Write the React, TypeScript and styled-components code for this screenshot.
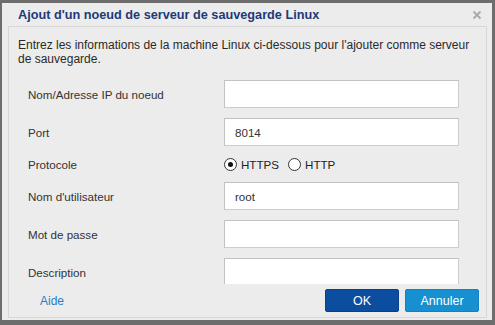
import React from 'react';
import styled, { createGlobalStyle } from 'styled-components';

const GlobalStyle = createGlobalStyle`
  html, body {
    margin: 0;
    padding: 0;
    background: #6d6d6d;
  }
  body {
    font-family: "Liberation Sans", Arial, sans-serif;
  }
`

const fields = [
  { label: 'Nom/Adresse IP du noeud', value: '' },
  { label: 'Port', value: '8014' },
  { label: 'Protocole', radio: true },
  { label: "Nom d'utilisateur", value: 'root' },
  { label: 'Mot de passe', value: '', password: true },
  { label: 'Description', value: '' },
]

const App: React.FC = () => {
  return (
    <>
      <GlobalStyle />
      <Frame>
        <Dialog>
          <TitleBar>
            <Title>Ajout d'un noeud de serveur de sauvegarde Linux</Title>
            <CloseIcon viewBox="0 0 10 10">
              <path d="M1.5 1.5 L8.5 8.5 M8.5 1.5 L1.5 8.5" stroke="#a9a9a9" strokeWidth="1.9" />
            </CloseIcon>
          </TitleBar>

          <Panel>
            <Intro>
              Entrez les informations de la machine Linux ci-dessous pour l'ajouter comme serveur de sauvegarde.
            </Intro>

            <FormArea>
              {fields.map((f) => (
                <FormRow key={f.label} $compact={!!f.radio}>
                  <FieldLabel>{f.label}</FieldLabel>
                  {f.radio ? (
                    <RadioGroup>
                      <RadioOption>
                        <RadioDot $checked />
                        HTTPS
                      </RadioOption>
                      <RadioOption>
                        <RadioDot />
                        HTTP
                      </RadioOption>
                    </RadioGroup>
                  ) : (
                    <TextInput
                      type={f.password ? 'password' : 'text'}
                      defaultValue={f.value}
                    />
                  )}
                </FormRow>
              ))}
            </FormArea>

            <Footer>
              <HelpLink>Aide</HelpLink>
              <Actions>
                <Button $primary>OK</Button>
                <Button>Annuler</Button>
              </Actions>
            </Footer>
          </Panel>
        </Dialog>
      </Frame>
    </>
  )
}

const Frame = styled.div`
  width: 495px;
  height: 325px;
  box-sizing: border-box;
  padding: 3px 3px 5px 2px;
  background: #6d6d6d;
`

const Dialog = styled.div`
  height: 100%;
  background: #ececec;
  display: flex;
  flex-direction: column;
`

const TitleBar = styled.div`
  height: 23px;
  display: flex;
  align-items: center;
  justify-content: space-between;
  padding: 0 10px 0 16px;
`

const Title = styled.div`
  color: #1d3a78;
  font-size: 12.7px;
  font-weight: 700;
`

const CloseIcon = styled.svg`
  width: 10px;
  height: 10px;
`

const Panel = styled.div`
  flex: 1;
  margin: 0 5px 2px 6px;
  border: 1px solid #d7d7d7;
  display: flex;
  flex-direction: column;
  min-height: 0;
`

const Intro = styled.div`
  padding: 11px 10px 0 9px;
  font-size: 12px;
  line-height: 14px;
  color: #2a2a2a;
`

const FormArea = styled.div`
  margin-top: 14px;
  height: 204px;
  overflow: hidden;
  display: flex;
  flex-direction: column;
  gap: 10px;
`

const FormRow = styled.div<{ $compact?: boolean }>`
  display: grid;
  grid-template-columns: 196px 235px;
  align-items: center;
  padding-left: 19px;
  height: ${props => (props.$compact ? '16px' : '28px')};
  flex-shrink: 0;
`

const FieldLabel = styled.div`
  font-size: 11.6px;
  color: #333;
`

const TextInput = styled.input`
  box-sizing: border-box;
  width: 235px;
  height: 28px;
  border: 1px solid #cdcdcd;
  border-top-color: #c2c2c2;
  border-left-color: #c2c2c2;
  background: #fff;
  padding: 0 10px;
  font-family: "Liberation Sans", Arial, sans-serif;
  font-size: 11.6px;
  color: #333;
  outline: none;
`

const RadioGroup = styled.div`
  display: flex;
  align-items: center;
  gap: 9px;
`

const RadioOption = styled.label`
  display: flex;
  align-items: center;
  gap: 4px;
  font-size: 11.6px;
  color: #222;
`

const RadioDot = styled.span<{ $checked?: boolean }>`
  width: 11px;
  height: 11px;
  border-radius: 50%;
  border: 1px solid #333;
  background: #fff;
  position: relative;
  &::after {
    content: '';
    display: ${props => (props.$checked ? 'block' : 'none')};
    position: absolute;
    left: 3px;
    top: 3px;
    width: 5px;
    height: 5px;
    border-radius: 50%;
    background: #111;
  }
`

const Footer = styled.div`
  display: flex;
  align-items: center;
  justify-content: space-between;
  padding: 5px 7px 0 31px;
`

const HelpLink = styled.a`
  color: #2b7bc9;
  font-size: 12px;
  cursor: pointer;
`

const Actions = styled.div`
  display: flex;
  gap: 6px;
`

const Button = styled.button<{ $primary?: boolean }>`
  width: 74px;
  height: 23px;
  border-radius: 2px;
  border: 1px solid ${props => (props.$primary ? '#0a3f86' : '#1480c0')};
  background: ${props => (props.$primary ? '#0b4e9f' : '#1790d1')};
  color: #fff;
  font-family: "Liberation Sans", Arial, sans-serif;
  font-size: 12.5px;
  padding: 0;
`

export default App
